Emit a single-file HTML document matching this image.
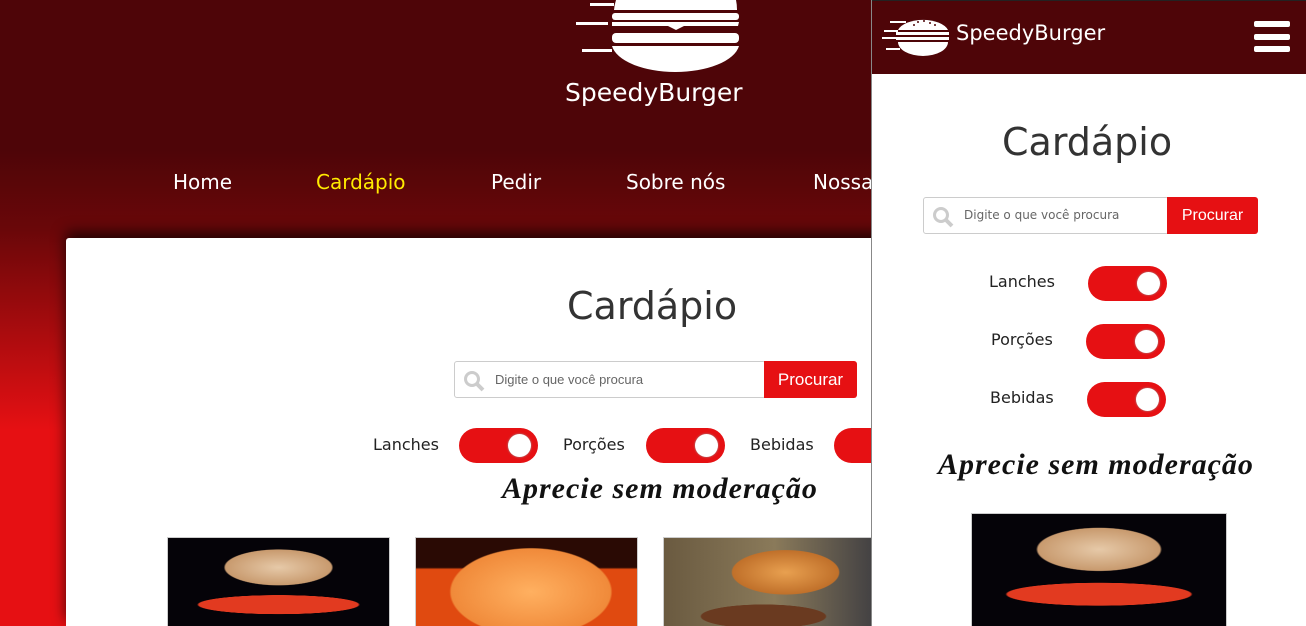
<!DOCTYPE html>
<html style="overflow:hidden;height:626px"><head><meta charset="utf-8"><style>
*{margin:0;padding:0;box-sizing:border-box}
body{width:1306px;height:626px;overflow:hidden;position:relative;font-family:"DejaVu Sans","Liberation Sans",sans-serif;background:linear-gradient(#4e0508 0px,#4e0508 150px,#6a0709 230px,#e61013 430px,#e61013 626px)}
.a{position:absolute}
.nav{color:#fff;font-size:20px;top:170px}
.card{left:66px;top:238px;width:840px;height:388px;background:#fff;border-radius:3px 3px 0 0;box-shadow:0 -6px 14px rgba(0,0,0,.7)}
.search{height:37px;border:1px solid #ccc;border-radius:3px;background:#fff}
.search span{position:absolute;left:40px;top:10px;font-family:"Liberation Sans",sans-serif;font-size:13px;color:#666}
.btn{background:#e61013;color:#fff;font-family:"Liberation Sans",sans-serif;font-size:17px;text-align:center;line-height:37px;height:37px;border-radius:0 3px 3px 0}
.tg{width:79px;height:35px;background:#e61013;border-radius:18px}
.tg::after{content:"";position:absolute;right:7px;top:6px;width:23px;height:23px;border-radius:50%;background:#fff;box-shadow:0 0 2px #999}
.lbl{font-size:16px;color:#222}
.script{font-family:"Liberation Serif",serif;font-style:italic;font-weight:bold;color:#111;white-space:nowrap;letter-spacing:1px}
.img1{background:radial-gradient(ellipse 40% 30% at 50% 30%,#e6c9a8,#c89a6e 60%,transparent 62%),radial-gradient(ellipse 45% 12% at 50% 68%,#e23a20 80%,transparent 82%),#050308}
.img2{background:radial-gradient(ellipse 45% 55% at 52% 55%,#ffb060,#f08a3a 80%,transparent 82%),linear-gradient(#2a0a04 30%,#e04a10 32%)}
.img3{background:radial-gradient(ellipse 30% 28% at 55% 35%,#e8a050,#c0702a 80%,transparent 82%),radial-gradient(ellipse 35% 15% at 45% 80%,#6a3a20 80%,transparent 82%),linear-gradient(90deg,#6a5a40,#8a7a5a 50%,#3a3a40)}
</style></head><body>
<svg class="a" style="left:572px;top:0" width="170" height="74" viewBox="0 0 170 74">
<g fill="#fff">
<path d="M44 0 H164 A46 46 0 0 1 165 10 H42 A46 46 0 0 1 44 0Z"/>
<rect x="40" y="13" width="127" height="7" rx="3"/>
<path d="M40 22 H167 L166 26 H112 L104 30 L96 26 H40Z"/>
<rect x="40" y="33" width="127" height="10" rx="4"/>
<path d="M40 46 H167 A64 30 0 0 1 103 72 A64 30 0 0 1 40 46Z"/>
<rect x="18" y="3" width="24" height="3"/>
<rect x="4" y="22" width="32" height="3"/>
<rect x="10" y="49" width="30" height="3"/>
</g></svg>
<div class="a" style="left:565px;top:78px;color:#fff;font-size:25px">SpeedyBurger</div>
<div class="a nav" style="left:173px">Home</div>
<div class="a nav" style="left:316px;color:#ffeb00">Cardápio</div>
<div class="a nav" style="left:491px">Pedir</div>
<div class="a nav" style="left:626px">Sobre nós</div>
<div class="a nav" style="left:813px">Nossa</div>

<div class="a card"></div>
<div class="a" style="left:567px;top:284px;font-size:38px;color:#333">Cardápio</div>
<div class="a search" style="left:454px;top:361px;width:312px"><svg class="a" style="left:8px;top:8px" width="22" height="22"><circle cx="9" cy="9" r="6.5" fill="none" stroke="#ccc" stroke-width="3"/><path d="M14 14 L20 20" stroke="#ccc" stroke-width="4"/></svg><span>Digite o que você procura</span></div>
<div class="a btn" style="left:764px;top:361px;width:93px">Procurar</div>
<div class="a lbl" style="left:373px;top:435px">Lanches</div>
<div class="a tg" style="left:459px;top:428px"></div>
<div class="a lbl" style="left:563px;top:435px">Porções</div>
<div class="a tg" style="left:646px;top:428px"></div>
<div class="a lbl" style="left:750px;top:435px">Bebidas</div>
<div class="a tg" style="left:834px;top:428px"></div>
<div class="a script" style="left:502px;top:472px;font-size:30px">Aprecie sem moderação</div>
<div class="a img1" style="left:167px;top:537px;width:223px;height:100px;border:1px solid #ccc"></div>
<div class="a img2" style="left:415px;top:537px;width:223px;height:100px;border:1px solid #ccc"></div>
<div class="a img3" style="left:663px;top:537px;width:223px;height:100px;border:1px solid #ccc"></div>

<div class="a" style="left:871px;top:0;width:435px;height:626px;background:#fff;border-left:1px solid #888"></div>
<div class="a" style="left:872px;top:0;width:434px;height:74px;background:#4e0508;border-top:1px solid #222"></div>
<svg class="a" style="left:880px;top:16px" width="70" height="42" viewBox="0 0 70 42">
<g fill="#fff"><path d="M18 14 A26 14 0 0 1 68 14Z"/><rect x="16" y="16" width="53" height="3"/><rect x="16" y="21" width="53" height="3"/><path d="M18 26 H68 A25 14 0 0 1 18 26Z"/>
<rect x="10" y="5" width="16" height="2"/><rect x="4" y="14" width="14" height="2"/><rect x="2" y="21" width="14" height="2"/><rect x="6" y="32" width="14" height="2"/></g>
<g fill="#4e0508"><circle cx="38" cy="6" r="1"/><circle cx="44" cy="5" r="1"/><circle cx="50" cy="7" r="1"/><circle cx="34" cy="9" r="1"/><circle cx="55" cy="9" r="1"/></g></svg>
<div class="a" style="left:956px;top:21px;color:#fff;font-size:21px">SpeedyBurger</div>
<div class="a" style="left:1254px;top:21px;width:36px;height:6px;background:#fff;border-radius:2px"></div>
<div class="a" style="left:1254px;top:34px;width:36px;height:6px;background:#fff;border-radius:2px"></div>
<div class="a" style="left:1254px;top:46px;width:36px;height:6px;background:#fff;border-radius:2px"></div>
<div class="a" style="left:1002px;top:120px;font-size:38px;color:#333">Cardápio</div>
<div class="a search" style="left:923px;top:197px;width:246px"><svg class="a" style="left:8px;top:8px" width="22" height="22"><circle cx="9" cy="9" r="6.5" fill="none" stroke="#ccc" stroke-width="3"/><path d="M14 14 L20 20" stroke="#ccc" stroke-width="4"/></svg><span style="font-family:'DejaVu Sans',sans-serif;font-size:12px">Digite o que você procura</span></div>
<div class="a btn" style="left:1167px;top:197px;width:91px;font-size:16px">Procurar</div>
<div class="a lbl" style="left:989px;top:272px">Lanches</div>
<div class="a tg" style="left:1088px;top:266px"></div>
<div class="a lbl" style="left:991px;top:330px">Porções</div>
<div class="a tg" style="left:1086px;top:324px"></div>
<div class="a lbl" style="left:990px;top:388px">Bebidas</div>
<div class="a tg" style="left:1087px;top:382px"></div>
<div class="a script" style="left:938px;top:448px;font-size:30px">Aprecie sem moderação</div>
<div class="a img1" style="left:971px;top:513px;width:256px;height:120px;border:1px solid #ccc"></div>
</body></html>
